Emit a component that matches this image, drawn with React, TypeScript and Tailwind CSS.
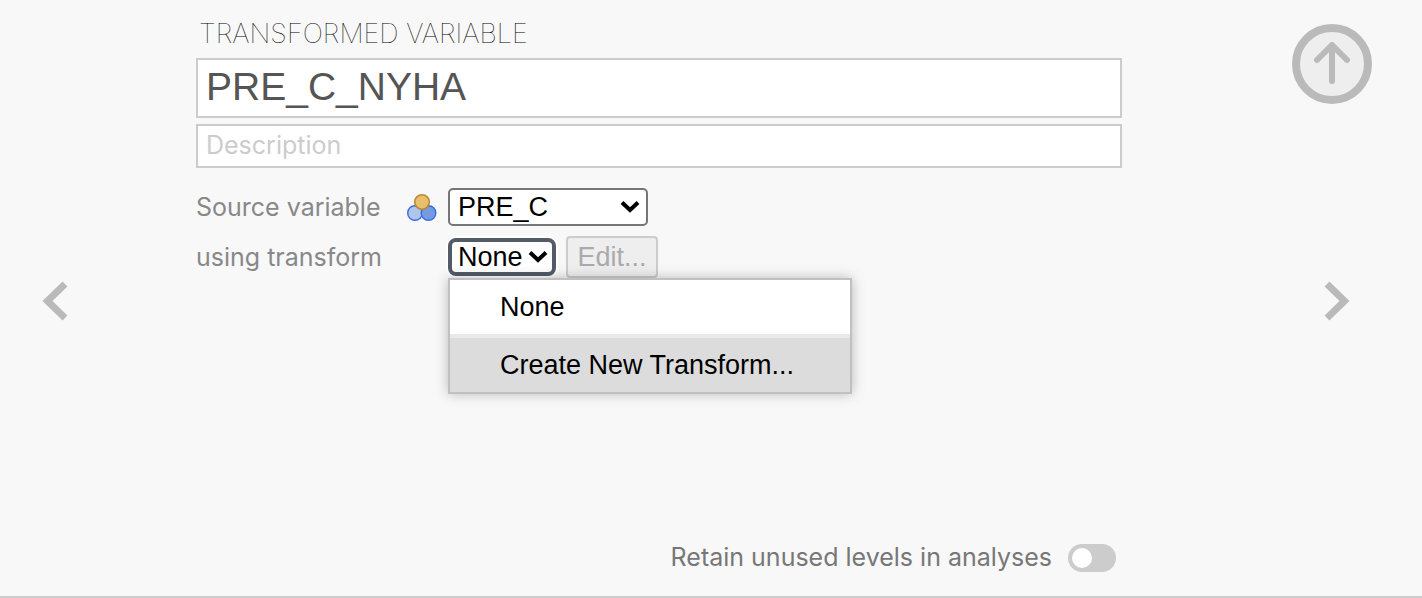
import { useState } from "react";

const uiFont = "font-['Inter',sans-serif]";
const controlFont = "font-['Liberation_Sans',Arial,sans-serif]";

const SelectChevron = () => {
  return (
    <svg
      viewBox="0 0 20 14"
      className="pointer-events-none absolute top-1/2 right-2 h-3.5 w-5 -translate-y-1/2"
      fill="none"
      stroke="#000"
      strokeWidth="4"
      aria-hidden="true"
    >
      <path d="M2 2.5L10 10L18 2.5" />
    </svg>
  );
};

const NominalIcon = () => {
  return (
    <svg viewBox="0 0 30 30" className="h-[30px] w-[30px]" aria-hidden="true">
      <circle cx="8" cy="20" r="7.3" fill="#afc5ee" stroke="#3b6ddd" strokeWidth="1.4" />
      <circle cx="21.5" cy="20" r="7.3" fill="#739ae2" stroke="#3b6ddd" strokeWidth="1.4" />
      <circle cx="15" cy="9" r="7.3" fill="#e9bf6e" stroke="#b98a32" strokeWidth="1.6" />
    </svg>
  );
};

const TransformMenu = ({ onPick }: { onPick: (value: string) => void }) => {
  return (
    <div
      role="menu"
      className="absolute top-full left-0 z-10 mt-0.5 w-[404px] border-2 border-[#c0c0c0] bg-white shadow-[0_0_12px_rgba(0,0,0,0.25)]"
    >
      <button
        type="button"
        role="menuitem"
        onClick={() => onPick("None")}
        className="block h-[54px] w-full pl-[50px] text-left"
      >
        None
      </button>
      <button
        type="button"
        role="menuitem"
        className="box-content block h-[54px] w-[350px] border-t-4 border-[#e9e9e9] bg-[#dcdcdc] pl-[50px] text-left"
      >
        Create New Transform...
      </button>
    </div>
  );
};

const App = () => {
  const [name, setName] = useState("PRE_C_NYHA");
  const [description, setDescription] = useState("");
  const [transform, setTransform] = useState("None");
  const [retain, setRetain] = useState(false);

  return (
    <div
      className={`flex min-h-screen border-b-2 border-[#cccccc] bg-[#f8f8f8] text-[25px] text-[#888888] ${uiFont}`}
    >
      <div className="flex w-[196px] shrink-0 items-center pt-1.5 pl-[42px]">
        <button type="button" aria-label="Previous variable">
          <svg viewBox="0 0 26 40" className="h-10 w-[26px]" fill="none" stroke="#bababa" strokeWidth="7">
            <path d="M23 3L5.500 20L23 37" />
          </svg>
        </button>
      </div>

      <main className="flex min-w-0 flex-1 flex-col">
        <h1 className="mt-3.5 mb-1 pl-[3px] text-[27px] leading-10 font-thin text-black">
          TRANSFORMED VARIABLE
        </h1>
        <input
          type="text"
          aria-label="Variable name"
          value={name}
          onChange={(e) => setName(e.target.value)}
          className={`h-[60px] w-full border-2 border-[#cccccc] bg-white px-2 pb-0.5 text-[39px] text-[#555555] outline-none ${controlFont}`}
        />
        <input
          type="text"
          aria-label="Description"
          placeholder="Description"
          value={description}
          onChange={(e) => setDescription(e.target.value)}
          className="mt-1.5 h-11 w-full border-2 border-[#cccccc] bg-white px-2 pb-0.5 text-[#555555] outline-none placeholder:text-[#cccccc]"
        />

        <div className="mt-5 flex h-[38px] items-center">
          <label htmlFor="source" className="w-[211px] pt-0.5">
            Source variable
          </label>
          <div className="w-[41px] pt-0.5">
            <NominalIcon />
          </div>
          <div className={`relative text-[27px] text-black ${controlFont}`}>
            <select
              id="source"
              className="block h-[38px] w-[200px] appearance-none rounded-[5px] border-2 border-[#767676] bg-white pl-2 leading-8"
            >
              <option>PRE_C</option>
            </select>
            <SelectChevron />
          </div>
        </div>

        <div className="mt-2.5 flex h-[42px] items-center">
          <label htmlFor="transform" className="w-[252px] pt-0.5">
            using transform
          </label>
          <div className={`relative text-[27px] text-black ${controlFont}`}>
            <select
              id="transform"
              value={transform}
              onChange={(e) => setTransform(e.target.value)}
              className="block h-[38px] w-[108px] appearance-none rounded-lg border-4 border-[#535b69] bg-white pl-1.5 leading-[30px] ring-2 ring-white"
            >
              <option>None</option>
            </select>
            <SelectChevron />
            <TransformMenu onPick={setTransform} />
          </div>
          <button
            type="button"
            disabled
            className={`ml-2.5 h-[42px] w-[92px] rounded border-2 border-[#cccccc] bg-[#eeeeee] text-[27px] leading-9 text-[#aaaaaa] ${controlFont}`}
          >
            Edit...
          </button>
        </div>

        <div className="mt-auto mr-1.5 mb-5 flex items-end justify-end gap-4 text-[#777777]">
          <label htmlFor="retain" className="leading-[38px]">
            Retain unused levels in analyses
          </label>
          <input
            id="retain"
            type="checkbox"
            role="switch"
            checked={retain}
            onChange={(e) => setRetain(e.target.checked)}
            className="mb-1 flex h-7 w-12 appearance-none items-center rounded-full bg-[#cccccc] px-1 before:h-5 before:w-5 before:rounded-full before:bg-white checked:justify-end checked:bg-[#3e6da9]"
          />
        </div>
      </main>

      <div className="relative flex w-[300px] shrink-0 items-center justify-end pt-1.5 pr-[72px]">
        <button
          type="button"
          aria-label="Close editor"
          className="absolute top-6 right-[50px] flex h-20 w-20 items-center justify-center rounded-full border-8 border-[#bababa] bg-[#eeeeee]"
        >
          <svg
            viewBox="0 0 40 44"
            className="h-11 w-10"
            fill="none"
            stroke="#bababa"
            strokeWidth="6"
            strokeLinecap="round"
            strokeLinejoin="round"
          >
            <path d="M20 39V3M5 18L20 3L35 18" />
          </svg>
        </button>
        <button type="button" aria-label="Next variable">
          <svg viewBox="0 0 26 40" className="h-10 w-[26px]" fill="none" stroke="#bababa" strokeWidth="7">
            <path d="M3 3L20.500 20L3 37" />
          </svg>
        </button>
      </div>
    </div>
  );
};

export default App;
